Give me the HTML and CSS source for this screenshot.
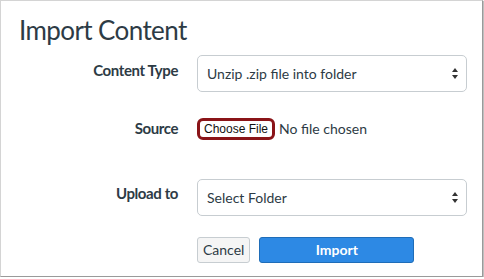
FILE: index.html
```html
<!DOCTYPE html>
<html>
<head>
	<meta charset="utf-8">
	<title>Import Content</title>
	<link rel="stylesheet" href="styles.css">
</head>
<body>
	<div class="dialog">
		<h1 class="dialog__title">Import Content</h1>

		<form class="import">
			<div class="import__row import__row_type">
				<label class="import__label">Content Type</label>
				<div class="select">
					<span class="select__txt">Unzip .zip file into folder</span>
					<span class="select__arrows"></span>
				</div>
			</div>

			<div class="import__row import__row_source">
				<label class="import__label">Source</label>
				<div class="file">
					<span class="file__btn">Choose File</span>
					<span class="file__txt">No file chosen</span>
				</div>
			</div>

			<div class="import__row import__row_folder">
				<label class="import__label">Upload to</label>
				<div class="select">
					<span class="select__txt">Select Folder</span>
					<span class="select__arrows"></span>
				</div>
			</div>

			<div class="import__row import__row_actions">
				<span class="import__label"></span>
				<div class="actions">
					<span class="btn">Cancel</span>
					<span class="btn btn_primary">Import</span>
				</div>
			</div>
		</form>
	</div>
</body>
</html>
```

FILE: styles.css
```css
html, body {
	margin: 0;
	padding: 0;
	background: #fff;
}

body {
	font-family: Lato, "Open Sans", sans-serif;
	color: #2d3b45;
	font-size: 14px;
}

.dialog {
	width: 481px;
	height: 275px;
	border: 1px solid #d4d4d4;
	border-right-color: #9a9a9a;
	border-bottom-color: #9a9a9a;
	box-shadow: 1px 1px 1px rgba(0,0,0,.25);
	background: #fff;
}
	.dialog__title {
		margin: 0;
		padding: 12px 0 0 18px;
		font-size: 26px;
		letter-spacing: -0.6px;
		line-height: 35px;
		font-weight: 400;
		color: #2d3b45;
	}

.import {
	display: flex;
	flex-direction: column;
	padding-top: 7px;
}
	.import__row {
		display: flex;
		align-items: flex-start;
		gap: 19px;
	}
	.import__row_source { margin-top: 26px; }
	.import__row_folder { margin-top: 39px; }
	.import__row_actions { margin-top: 21px; }

	.import__label {
		width: 177px;
		flex: none;
		text-align: right;
		font-weight: 700;
		font-size: 15px;
		letter-spacing: -0.4px;
		line-height: 20px;
	}
	.import__row_type .import__label { padding-top: 5px; }
	.import__row_source .import__label { padding-top: 0; }
	.import__row_folder .import__label { padding-top: 4px; }

.select {
	width: 270px;
	height: 37px;
	box-sizing: border-box;
	border: 1px solid #c7cdd1;
	border-radius: 5px;
	display: flex;
	align-items: center;
	justify-content: space-between;
	padding: 0 7px 0 9px;
	font-size: 14px;
}
	.select__arrows {
		position: relative;
		width: 7px;
		height: 11px;
	}
		.select__arrows:before,
		.select__arrows:after {
			content: "";
			position: absolute;
			left: 0;
			border-left: 3.5px solid transparent;
			border-right: 3.5px solid transparent;
		}
		.select__arrows:before {
			top: 0;
			border-bottom: 4.5px solid #333;
		}
		.select__arrows:after {
			bottom: 0;
			border-top: 4.5px solid #333;
		}

.file {
	display: flex;
	align-items: center;
	gap: 4px;
}
	.file__btn {
		display: inline-block;
		height: 22px;
		box-sizing: border-box;
		border: 3px solid #8a1418;
		border-radius: 6px;
		padding: 0 4px;
		font-family: "Liberation Sans", Arial, sans-serif;
		font-size: 12px;
		line-height: 16px;
		color: #111;
		background: #fff;
	}
	.file__txt {
		font-size: 14px;
		line-height: 22px;
	}

.actions {
	display: flex;
	gap: 9px;
}
	.btn {
		height: 26px;
		box-sizing: border-box;
		border: 1px solid #c7cdd1;
		border-radius: 3px;
		background: #f5f5f5;
		padding: 0 5px;
		font-size: 14px;
		line-height: 24px;
		color: #2d3b45;
	}
	.btn_primary {
		width: 155px;
		text-align: center;
		background: #2d89e4;
		border-color: #1f6db8;
		color: #fff;
		font-weight: 700;
	}
```
